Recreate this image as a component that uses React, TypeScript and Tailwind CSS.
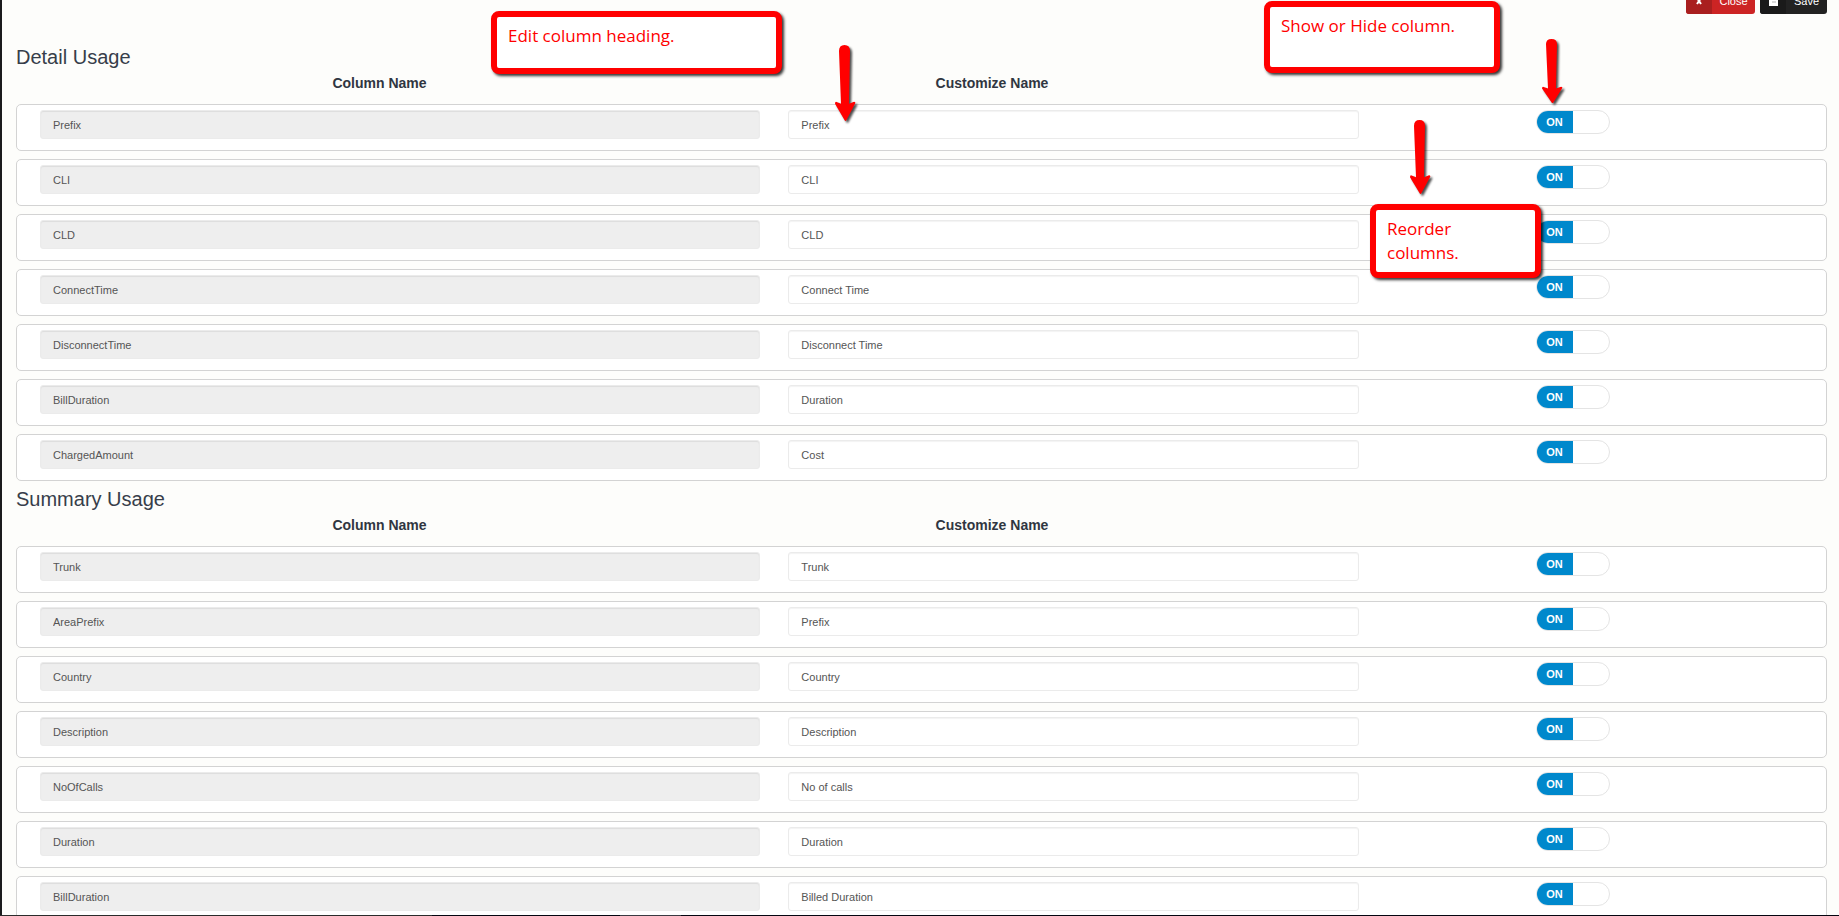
import React, { useState } from 'react';

interface Column {
  id: string;
  name: string;
  label: string;
}

const DETAIL_COLUMNS: Column[] = [
  { id: 'detail-prefix', name: 'Prefix', label: 'Prefix' },
  { id: 'detail-cli', name: 'CLI', label: 'CLI' },
  { id: 'detail-cld', name: 'CLD', label: 'CLD' },
  { id: 'detail-connect', name: 'ConnectTime', label: 'Connect Time' },
  { id: 'detail-disconnect', name: 'DisconnectTime', label: 'Disconnect Time' },
  { id: 'detail-bill', name: 'BillDuration', label: 'Duration' },
  { id: 'detail-charged', name: 'ChargedAmount', label: 'Cost' },
];

const SUMMARY_COLUMNS: Column[] = [
  { id: 'summary-trunk', name: 'Trunk', label: 'Trunk' },
  { id: 'summary-area', name: 'AreaPrefix', label: 'Prefix' },
  { id: 'summary-country', name: 'Country', label: 'Country' },
  { id: 'summary-description', name: 'Description', label: 'Description' },
  { id: 'summary-calls', name: 'NoOfCalls', label: 'No of calls' },
  { id: 'summary-duration', name: 'Duration', label: 'Duration' },
  { id: 'summary-bill', name: 'BillDuration', label: 'Billed Duration' },
];

function Toggle({ label }: { label: string }) {
  const [on, setOn] = useState(true);

  return (
    <label className="relative flex h-6 w-[74px] cursor-pointer overflow-hidden rounded-full border border-[#e4e4e4] bg-white">
      <input
        type="checkbox"
        aria-label={label}
        checked={on}
        onChange={(e) => setOn(e.target.checked)}
        className="peer sr-only"
      />
      <span className="hidden h-[22px] w-9 bg-[#0088cc] text-center text-[11px] leading-[22px] font-bold text-white peer-checked:block">
        ON
      </span>
    </label>
  );
}

function ColumnRow({ column }: { column: Column }) {
  const [label, setLabel] = useState(column.label);

  return (
    <li className="grid grid-cols-[5fr_4fr_3fr] items-start rounded-[5px] border border-[#d3d3d3] bg-white pt-[5px] pr-1 pb-[11px] pl-[9px]">
      <div className="px-[14px]">
        <input
          type="text"
          readOnly
          aria-label={`${column.name} column name`}
          value={column.name}
          className="block h-[29px] w-full rounded-[3px] border border-[#ebebeb] bg-[#eeeeee] px-3 text-[11px] text-[#555555] shadow-[inset_0_1px_1px_rgba(0,0,0,0.075)] outline-none"
        />
      </div>
      <div className="px-[14px]">
        <input
          type="text"
          aria-label={`${column.name} custom name`}
          value={label}
          onChange={(e) => setLabel(e.target.value)}
          className="block h-[29px] w-full rounded-[3px] border border-[#ebebeb] bg-white px-3 text-[11px] text-[#555555] shadow-[inset_0_1px_1px_rgba(0,0,0,0.05)] outline-none"
        />
      </div>
      <div className="flex justify-center pr-[50px]">
        <Toggle label={`Show ${column.name}`} />
      </div>
    </li>
  );
}

function UsageSection({ title, columns }: { title: string; columns: Column[] }) {
  return (
    <section>
      <h2 className="pt-1 pb-[2px] text-[20px] leading-7 text-[#373e4a]">{title}</h2>
      <div className="grid grid-cols-[727fr_498fr_586fr] pb-[11px] text-center text-[14px] leading-5 font-bold text-[#303641]">
        <span>Column Name</span>
        <span>Customize Name</span>
      </div>
      <ul className="flex flex-col gap-2">
        {columns.map((column) => (
          <ColumnRow key={column.id} column={column} />
        ))}
      </ul>
    </section>
  );
}

function Callout({ className, children }: { className: string; children: React.ReactNode }) {
  return (
    <div
      className={`absolute rounded-lg border-[6px] border-[#ff0000] bg-white px-[11px] py-[7px] font-['Open_Sans','Noto_Sans',sans-serif] text-[17px] leading-6 text-[#ff0000] shadow-[2px_2px_3px_rgba(0,0,0,0.8)] ${className}`}
    >
      {children}
    </div>
  );
}

function Arrow({ className }: { className: string }) {
  return (
    <svg
      viewBox="0 0 20 75"
      preserveAspectRatio="none"
      className={`absolute w-5 overflow-visible drop-shadow-[2px_2px_1px_rgba(0,0,0,0.7)] ${className}`}
      aria-hidden="true"
    >
      <path
        d="M4 6 Q4 0 9.500 0 Q15 0 15 6 L14 58 L19 56 Q21 56 20 58 L11.500 74 Q10.500 76 9.500 74 L0 58 Q0 56 1 56 L6 58 Z"
        fill="#ff0000"
      />
    </svg>
  );
}

export default function App() {
  return (
    <div className="relative flex h-screen flex-col overflow-hidden bg-[#fdfdfb] font-['Liberation_Sans',Arial,sans-serif]">
      <main className="min-h-0 flex-1 overflow-hidden border-l-2 border-[#1b1b1d] pr-3 pl-[14px]">
        {/* Toolbar, scrolled partly out of view */}
        <div className="-mt-3 mb-[25px] flex h-[26px] justify-end gap-[5px] text-[11px] text-white">
          <button type="button" className="flex h-full items-center overflow-hidden rounded-[3px] bg-[#cc2424]">
            <span className="flex h-full w-[26px] items-center justify-center bg-[#a91f1f]">
              <svg viewBox="0 0 8 8" className="h-2 w-2" aria-hidden="true">
                <path d="M2 1 L6 7 M6 1 L2 7" stroke="#fff" strokeWidth="2" />
              </svg>
            </span>
            <span className="w-[43px] text-center">Close</span>
          </button>
          <button type="button" className="flex h-full items-center overflow-hidden rounded-[3px] bg-[#222222]">
            <span className="flex h-full w-[26px] items-center justify-center bg-[#1a1a1a]">
              <svg viewBox="0 0 9 9" className="h-[9px] w-[9px]" aria-hidden="true">
                <path d="M0 0h9v9H0z" fill="#fff" />
                <path d="M2 0h5v3H2z" fill="#1a1a1a" />
                <path d="M3 4h4v2H3z" fill="#d9d9d9" />
              </svg>
            </span>
            <span className="w-[41px] text-center">Save</span>
          </button>
        </div>

        <UsageSection title="Detail Usage" columns={DETAIL_COLUMNS} />
        <UsageSection title="Summary Usage" columns={SUMMARY_COLUMNS} />
      </main>

      {/* Edge of the taskbar */}
      <div className="flex h-px shrink-0 bg-[#050510]">
        <div className="w-[432px] bg-[#2b2b2b]" />
        <div className="ml-[188px] w-[61px] bg-[#3a3a42]" />
      </div>

      {/* Help annotations */}
      <Callout className="top-[11px] left-[491px] h-[63px] w-[291px]">Edit column heading.</Callout>
      <Callout className="top-[1px] left-[1264px] h-[72px] w-[236px]">Show or Hide column.</Callout>
      <Callout className="top-[204px] left-[1370px] h-[74px] w-[171px]">Reorder columns.</Callout>
      <Arrow className="top-[45px] left-[835px] h-[76px]" />
      <Arrow className="top-[39px] left-[1542px] h-[64px]" />
      <Arrow className="top-[120px] left-[1410px] h-[74px]" />
    </div>
  );
}
